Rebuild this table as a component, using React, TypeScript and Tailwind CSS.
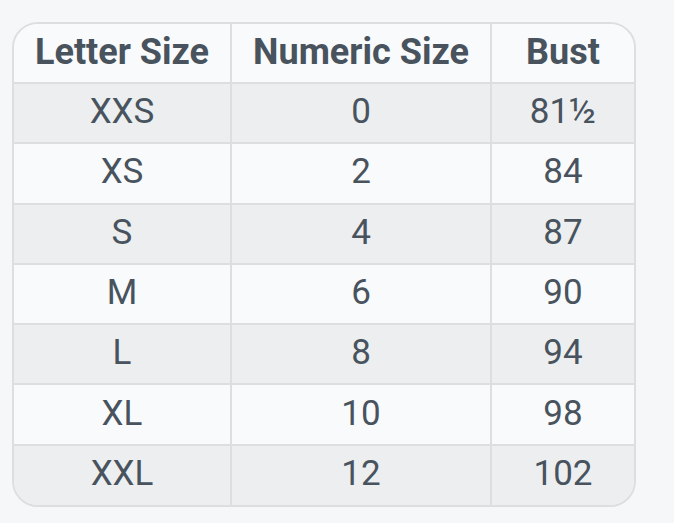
const rows = [
  ['XXS', '0', '81½'],
  ['XS', '2', '84'],
  ['S', '4', '87'],
  ['M', '6', '90'],
  ['L', '8', '94'],
  ['XL', '10', '98'],
  ['XXL', '12', '102'],
];

export default function App() {
  return (
    <div className="w-[674px] h-[523px] bg-[#f6f7f9] pt-[22px] pl-[12px] font-['Roboto',sans-serif] text-[#48535e]">
      <div className="w-[624px] rounded-[26px] border-2 border-[#dcdee0] overflow-hidden">
        <table className="w-full border-collapse text-center">
          <thead>
            <tr className="h-[59px] bg-[#f9fafb] text-[36px] leading-none font-bold">
              <th className="w-[217px] border-r-2 border-b-2 border-[#dcdee0] pb-[2px]">Letter Size</th>
              <th className="w-[260px] border-r-2 border-b-2 border-[#dcdee0] pb-[2px]">Numeric Size</th>
              <th className="border-b-2 border-[#dcdee0] pb-[2px]">Bust</th>
            </tr>
          </thead>
          <tbody>
            {rows.map((r, i) => (
              <tr
                key={r[0]}
                className={`h-[60.3px] text-[35px] leading-none ${i % 2 === 0 ? 'bg-[#eceef0]' : 'bg-[#f9fafb]'}`}
              >
                {r.map((c, j) => (
                  <td
                    key={j}
                    className={`${j < 2 ? 'border-r-2' : ''} ${i < rows.length - 1 ? 'border-b-2' : ''} border-[#dcdee0] pb-[3px]`}
                  >
                    {c}
                  </td>
                ))}
              </tr>
            ))}
          </tbody>
        </table>
      </div>
    </div>
  );
}
